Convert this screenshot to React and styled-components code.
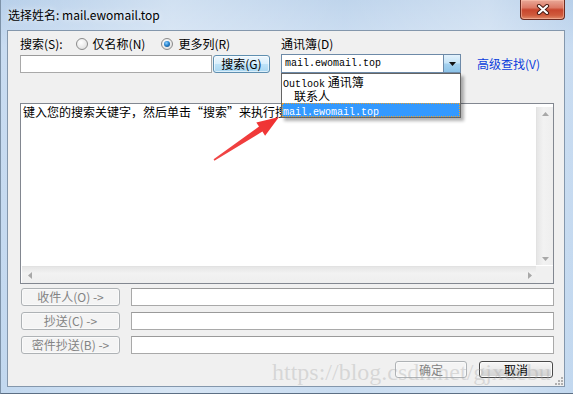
import React from 'react';
import styled, { createGlobalStyle } from 'styled-components';

const Global = createGlobalStyle`
  html, body { margin: 0; padding: 0; background: #fff; }
  body { font-family: "Noto Sans CJK SC", sans-serif; font-size: 12px; color: #000; }
  * { box-sizing: border-box; }
`;

const Window = styled.div`
  position: relative;
  width: 573px;
  height: 394px;
  display: flex;
  flex-direction: column;
  overflow: hidden;
  background:
    linear-gradient(90deg, rgba(255,255,255,0) 0%, rgba(255,255,255,0.35) 30%, rgba(255,255,255,0.1) 60%, rgba(255,255,255,0.3) 85%, rgba(255,255,255,0) 100%),
    linear-gradient(180deg, #b8d0ea 0%, #c9dcf1 12%, #c2d8ef 100%);
  border-left: 1px solid #7d92a8;
  border-bottom: 1px solid #5c6f84;
`;

const TitleBar = styled.div`
  height: 30px;
  flex: none;
  display: flex;
  align-items: flex-start;
  padding-left: 7px;
`;

const Title = styled.div`
  font-size: 12px;
  line-height: 16px;
  margin-top: 7px;
  color: #000;
  text-shadow: 0 0 6px rgba(255,255,255,0.9);
`;

const CloseButton = styled.div`
  margin-left: auto;
  margin-right: 8px;
  width: 45px;
  height: 20px;
  border: 1px solid #6b2c22;
  border-top: none;
  border-radius: 0 0 4px 4px;
  background: linear-gradient(180deg, #e9a898 0%, #dc7a66 40%, #c8462e 52%, #cf5a3c 80%, #e08a6a 100%);
  box-shadow: inset 0 0 0 1px rgba(255,200,180,0.5);
  display: flex;
  align-items: center;
  justify-content: center;
`;

const Client = styled.div`
  flex: 1;
  margin: 0 8px 6px 6px;
  background: #f0f0f0;
  border: 1px solid #8497ac;
  display: flex;
  flex-direction: column;
  padding: 6px 10px 0 12px;
`;

const TopGrid = styled.div`
  display: grid;
  grid-template-columns: 250px 180px 1fr;
  grid-template-rows: 14px 19px;
  column-gap: 11px;
  row-gap: 3px;
  align-items: center;
`;

const LabelRow = styled.div`
  display: flex;
  align-items: center;
  height: 14px;
  line-height: 14px;
  white-space: nowrap;
`;

const RadioGroup = styled.label`
  display: flex;
  align-items: center;
  margin-left: ${p => p.$gap}px;
`;

const RadioCircle = styled.span`
  width: 12px;
  height: 12px;
  border-radius: 50%;
  border: 1px solid #8a8a8a;
  background: radial-gradient(circle at 40% 35%, #ffffff 0%, #e8e8e8 60%, #d4d4d4 100%);
  display: flex;
  align-items: center;
  justify-content: center;
  margin-right: 5px;
  &::after {
    content: "";
    display: ${p => (p.$checked ? 'block' : 'none')};
    width: 6px;
    height: 6px;
    border-radius: 50%;
    background: radial-gradient(circle at 40% 35%, #8fd0ff 0%, #2a86d0 45%, #0b3f73 100%);
  }
`;

const SearchLine = styled.div`
  display: flex;
  align-items: flex-end;
  height: 19px;
`;

const TextBox = styled.div`
  width: ${p => p.$w || 'auto'};
  flex: ${p => (p.$grow ? 1 : 'none')};
  height: 18px;
  background: #fff;
  border: 1px solid #a9a9a9;
  border-top-color: #9a9a9a;
`;

const BlueButton = styled.div`
  width: 57px;
  height: 18px;
  margin-left: 1px;
  border: 1px solid #5f8fb0;
  border-radius: 3px;
  background: linear-gradient(180deg, #eef7fd 0%, #d9effc 48%, #bee3f8 52%, #a8d6f1 100%);
  box-shadow: inset 0 0 0 1px rgba(255,255,255,0.6);
  display: flex;
  align-items: center;
  justify-content: center;
  line-height: 14px;
`;

const ComboWrap = styled.div`
  position: relative;
  width: 180px;
  height: 19px;
`;

const Combo = styled.div`
  width: 100%;
  height: 19px;
  border: 1px solid #6d8aa8;
  background: #fff;
  display: flex;
  align-items: center;
  padding-left: 3px;
`;

const ComboArrow = styled.div`
  margin-left: auto;
  width: 17px;
  height: 17px;
  border-left: 1px solid #6d8aa8;
  background: linear-gradient(180deg, #e3f2fc 0%, #c4e3f7 48%, #a4d1ef 52%, #8cc3e8 100%);
  display: flex;
  align-items: center;
  justify-content: center;
`;

const Mono = styled.span`
  font-family: "Liberation Mono", "DejaVu Sans Mono", monospace;
  font-size: 10px;
  line-height: 12px;
`;

const DropList = styled.div`
  position: absolute;
  left: 0;
  top: 19px;
  width: 180px;
  height: 45px;
  background: #fff;
  border: 1px solid #646464;
  box-shadow: 3px 3px 3px rgba(0,0,0,0.3);
  padding-top: 1px;
  z-index: 5;
`;

const DropItem = styled.div`
  height: 14px;
  line-height: 14px;
  padding-left: ${p => p.$indent}px;
  white-space: nowrap;
  color: ${p => (p.$selected ? '#fff' : '#000')};
  background: ${p => (p.$selected ? '#3399ff' : 'transparent')};
  outline: ${p => (p.$selected ? '1px dotted #e8a030' : 'none')};
  outline-offset: -1px;
`;

const Link = styled.div`
  color: #0b3ddc;
  margin-left: 5px;
  white-space: nowrap;
  line-height: 14px;
`;

const ListBox = styled.div`
  margin-top: 30px;
  height: 181px;
  border: 1px solid #828790;
  background: #fff;
  display: grid;
  grid-template-columns: 1fr 17px;
  grid-template-rows: 1fr 17px;
  padding: 1px 0 0 1px;
`;

const ListText = styled.div`
  line-height: 12px;
  padding: 1px 0 0 1px;
  white-space: nowrap;
  overflow: hidden;
`;

const VScroll = styled.div`
  margin: 2px 0 1px 0;
  background: linear-gradient(90deg, #e6e6e6 0%, #f2f2f2 40%, #eeeeee 100%);
  border-left: 1px solid #e2e2e2;
  display: flex;
  flex-direction: column;
  justify-content: space-between;
  align-items: center;
  padding: 5px 0 4px;
`;

const HScroll = styled.div`
  background: linear-gradient(180deg, #e6e6e6 0%, #f2f2f2 40%, #eeeeee 100%);
  border-top: 1px solid #e2e2e2;
  display: flex;
  justify-content: space-between;
  align-items: center;
  padding: 0 4px 0 6px;
`;

const Corner = styled.div`
  background: #f0f0f0;
`;

const RecipientList = styled.div`
  margin-top: 4px;
  display: flex;
  flex-direction: column;
  gap: 6px;
`;

const RecipientRow = styled.div`
  display: flex;
  align-items: center;
  gap: 11px;
  padding-left: 1px;
`;

const GreyButton = styled.div`
  width: ${p => p.$w}px;
  height: ${p => p.$h || 18}px;
  flex: none;
  border: 1px solid ${p => (p.$default ? '#4a4a4a' : '#aeb2b5')};
  border-radius: 3px;
  background: ${p => (p.$default
    ? 'linear-gradient(180deg, #f6f6f6 0%, #ebebeb 48%, #dddddd 52%, #d2d2d2 100%)'
    : '#f4f4f4')};
  box-shadow: ${p => (p.$default ? 'inset 0 0 0 1px #fcfcfc' : 'inset 0 0 0 1px #fafafa')};
  color: ${p => (p.$disabled ? '#838383' : '#000')};
  display: flex;
  align-items: center;
  justify-content: center;
  line-height: 14px;
  white-space: nowrap;
`;

const Footer = styled.div`
  margin-top: 7px;
  display: flex;
  justify-content: flex-end;
  gap: 12px;
  padding-right: 1px;
`;

const Watermark = styled.div`
  position: absolute;
  left: 271px;
  top: 360px;
  font-family: "Liberation Serif", serif;
  font-size: 24px;
  line-height: 24px;
  color: rgba(165,165,165,0.35);
  white-space: nowrap;
  pointer-events: none;
  z-index: 10;
`;

const Overlay = styled.svg`
  position: absolute;
  left: 0;
  top: 0;
  pointer-events: none;
  z-index: 20;
`;

const Grip = styled.svg`
  position: absolute;
  right: 10px;
  bottom: 8px;
  z-index: 11;
`;

const Tri = ({ dir, color = '#a8a8a8' }) => {
  const pts = {
    up: '0,4 3.5,0 7,4',
    down: '0,0 7,0 3.5,4',
    left: '4,0 4,7 0,3.5',
    right: '0,0 0,7 4,3.5',
  }[dir];
  const w = dir === 'up' || dir === 'down' ? 7 : 4;
  const h = dir === 'up' || dir === 'down' ? 4 : 7;
  return (
    <svg width={w} height={h} viewBox={`0 0 ${w} ${h}`}>
      <polygon points={pts} fill={color} />
    </svg>
  );
};

export default function App() {
  return (
    <>
      <Global />
      <Window>
        <TitleBar>
          <Title>选择姓名: mail.ewomail.top</Title>
          <CloseButton>
            <svg width="14" height="11" viewBox="0 0 14 11">
              <path d="M3 2 L11 9 M11 2 L3 9" stroke="#4a1c14" strokeWidth="4.2" strokeLinecap="round" />
              <path d="M3 2 L11 9 M11 2 L3 9" stroke="#ffffff" strokeWidth="2.2" strokeLinecap="round" />
            </svg>
          </CloseButton>
        </TitleBar>
        <Client>
          <TopGrid>
            <LabelRow>
              搜索(S):
              <RadioGroup $gap={13}>
                <RadioCircle />
                仅名称(N)
              </RadioGroup>
              <RadioGroup $gap={16}>
                <RadioCircle $checked />
                更多列(R)
              </RadioGroup>
            </LabelRow>
            <LabelRow>通讯簿(D)</LabelRow>
            <div />
            <SearchLine>
              <TextBox $w="192px" />
              <BlueButton>搜索(G)</BlueButton>
            </SearchLine>
            <ComboWrap>
              <Combo>
                <Mono>mail.ewomail.top</Mono>
                <ComboArrow>
                  <Tri dir="down" color="#111" />
                </ComboArrow>
              </Combo>
              <DropList>
                <DropItem $indent={1}><Mono>Outlook</Mono> 通讯簿</DropItem>
                <DropItem $indent={12}>联系人</DropItem>
                <DropItem $indent={1} $selected><Mono>mail.ewomail.top</Mono></DropItem>
              </DropList>
            </ComboWrap>
            <Link>高级查找(V)</Link>
          </TopGrid>

          <ListBox>
            <ListText>键入您的搜索关键字，然后单击“搜索”来执行搜索。</ListText>
            <VScroll>
              <Tri dir="up" />
              <Tri dir="down" />
            </VScroll>
            <HScroll>
              <Tri dir="left" />
              <Tri dir="right" />
            </HScroll>
            <Corner />
          </ListBox>

          <RecipientList>
            <RecipientRow>
              <GreyButton $w={99} $disabled>收件人(O) -&gt;</GreyButton>
              <TextBox $grow />
            </RecipientRow>
            <RecipientRow>
              <GreyButton $w={99} $disabled>抄送(C) -&gt;</GreyButton>
              <TextBox $grow />
            </RecipientRow>
            <RecipientRow>
              <GreyButton $w={99} $disabled>密件抄送(B) -&gt;</GreyButton>
              <TextBox $grow />
            </RecipientRow>
          </RecipientList>

          <Footer>
            <GreyButton $w={72} $h={17} $disabled>确定</GreyButton>
            <GreyButton $w={74} $h={17} $default>取消</GreyButton>
          </Footer>
        </Client>

        <Watermark>https://blog.csdn.net/gjxuebu</Watermark>
        <Grip width="8" height="8" viewBox="0 0 8 8">
          {[[6, 0], [6, 3], [3, 3], [6, 6], [3, 6], [0, 6]].map(([x, y]) => (
            <rect key={`${x}-${y}`} x={x} y={y} width="2" height="2" fill="#b0b0b0" />
          ))}
        </Grip>
        <Overlay width="573" height="394" viewBox="0 0 573 394">
          <defs>
            <linearGradient id="arr" x1="0" y1="1" x2="1" y2="0">
              <stop offset="0" stopColor="#f04848" />
              <stop offset="1" stopColor="#f03030" />
            </linearGradient>
          </defs>
          <polygon
            points="212.6,159.3 258,126.6 255.3,122.4 278,117 264.1,135.8 261.4,131.6 213.4,160.7"
            fill="url(#arr)"
          />
        </Overlay>
      </Window>
    </>
  );
}
